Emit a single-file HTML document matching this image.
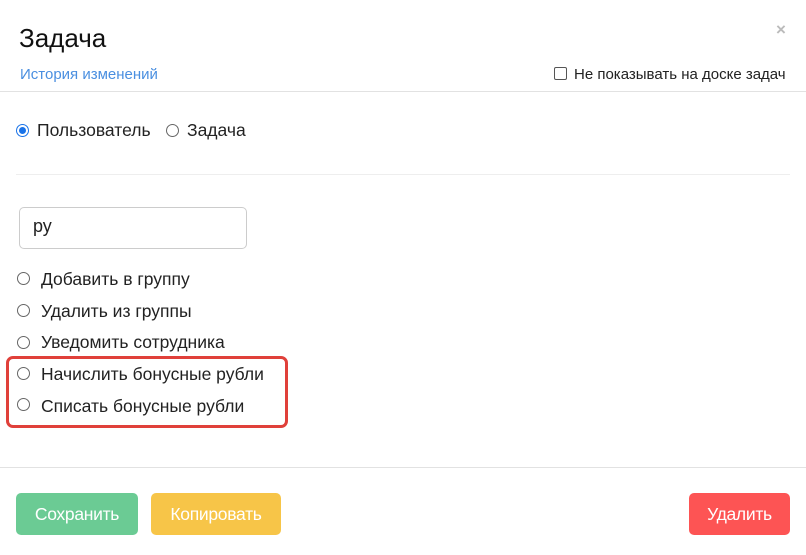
<!DOCTYPE html>
<html><head><meta charset="utf-8"><style>
body{margin:0;width:806px;height:555px;background:#fff;font-family:"Liberation Sans",sans-serif;color:#222;position:relative;overflow:hidden}
.a{position:absolute;white-space:nowrap}
.rad{position:absolute;width:11px;height:11px;border:1px solid #666;border-radius:50%;background:#fff}
.btn{position:absolute;top:493px;height:42px;border-radius:5px;color:#fff;font-size:17.5px;line-height:42px;text-align:center;letter-spacing:-0.3px}
.opt{font-size:17.5px;letter-spacing:0}
</style></head><body>
<div class="a" style="left:19px;top:23px;font-size:26px;color:#111">Задача</div>
<div class="a" style="left:776px;top:20px;font-size:17px;font-weight:bold;color:#bbb">×</div>
<div class="a" style="left:20px;top:66px;font-size:15px;color:#4a8fe0">История изменений</div>
<div class="a" style="left:554px;top:67px;width:11px;height:11px;border:1px solid #555;border-radius:2px"></div>
<div class="a" style="left:574px;top:66px;font-size:15px">Не показывать на доске задач</div>
<div class="a" style="left:0;top:91px;width:806px;height:1px;background:#e2e2e2"></div>
<div class="rad" style="left:16px;top:124px;border-color:#1a73e8;width:11px;height:11px"></div>
<div class="a" style="left:19px;top:127px;width:7px;height:7px;border-radius:50%;background:#1a73e8"></div>
<div class="a" style="left:37px;top:120px;font-size:17.5px">Пользователь</div>
<div class="rad" style="left:166px;top:124px"></div>
<div class="a" style="left:187px;top:120px;font-size:17.5px">Задача</div>
<div class="a" style="left:16px;top:174px;width:774px;height:1px;background:#eee"></div>
<div class="a" style="left:19px;top:207px;width:226px;height:40px;border:1px solid #ccc;border-radius:5px"></div>
<div class="a" style="left:33px;top:216px;font-size:18px">ру</div>
<div class="rad" style="left:17px;top:272px"></div><div class="a opt" style="left:41px;top:269px">Добавить в группу</div>
<div class="rad" style="left:17px;top:304px"></div><div class="a opt" style="left:41px;top:301px">Удалить из группы</div>
<div class="rad" style="left:17px;top:336px"></div><div class="a opt" style="left:41px;top:332px">Уведомить сотрудника</div>
<div class="rad" style="left:17px;top:367px"></div><div class="a opt" style="left:41px;top:364px">Начислить бонусные рубли</div>
<div class="rad" style="left:17px;top:398px"></div><div class="a opt" style="left:41px;top:396px">Списать бонусные рубли</div>
<div class="a" style="left:6px;top:356px;width:276px;height:66px;border:3px solid #e0403a;border-radius:7px"></div>
<div class="a" style="left:0;top:467px;width:806px;height:1px;background:#e2e2e2"></div>
<div class="btn" style="left:16px;width:122px;background:#6bcb94">Сохранить</div>
<div class="btn" style="left:151px;width:130px;background:#f7c548">Копировать</div>
<div class="btn" style="left:689px;width:101px;background:#fd5454">Удалить</div>
</body></html>
